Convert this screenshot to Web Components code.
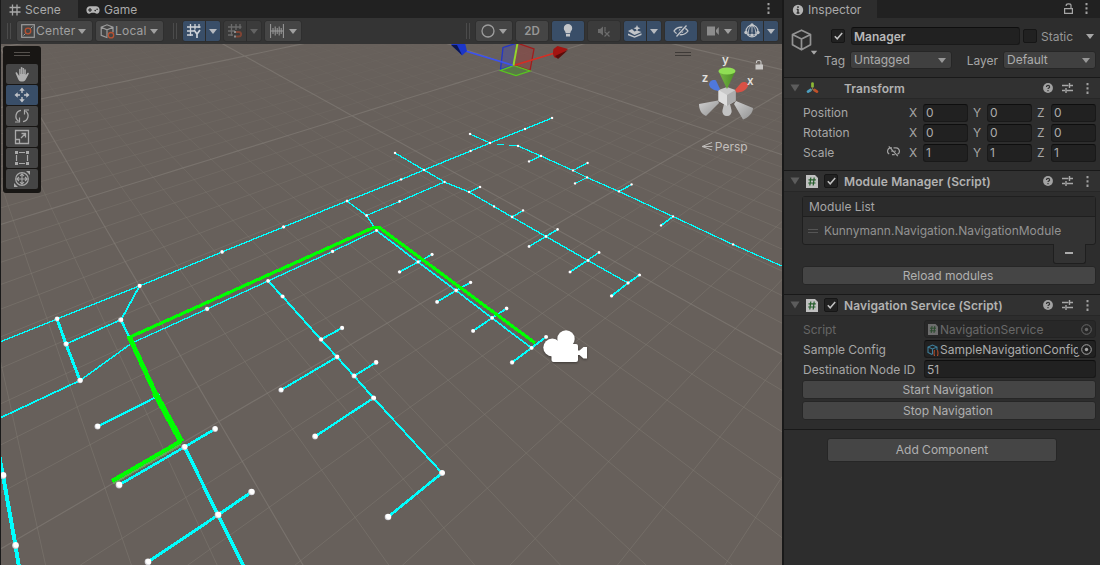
<!DOCTYPE html>
<html lang="en"><head><meta charset="utf-8"><title>Editor</title>
<style>
html,body{margin:0;height:100%;background:#191919;overflow:hidden}
body{font:12px/16px Inter,"Open Sans","Liberation Sans",sans-serif;color:#a6a6a6}
</style></head><body>
<editor-window></editor-window>
<script>
const define=(name,css,html)=>customElements.define(name,class extends HTMLElement{
  constructor(){super();this.attachShadow({mode:'open'});}
  connectedCallback(){
    if(this.shadowRoot.childNodes.length)return;
    const t=document.createElement('template');
    t.innerHTML='<style>*{box-sizing:border-box}'+css+'</style>'+(typeof html==='function'?html(this):html);
    this.shadowRoot.append(t.content.cloneNode(true));
  }
});

/* name: [width, height, markup] */
const ICONS={
  hash:[12,12,'<path d="M3.500 .5v11M8 .5v11M.5 3.500h11M.5 8h11" stroke="#a8a8a8" stroke-width="1.300"/>'],
  pad:[14,10,'<path d="M4 1.200h6c2 0 3.600 1.400 3.600 3.700S12.400 8.700 10.900 8.700c-1.200 0-1.700-1-2.400-1h-3c-.7 0-1.200 1-2.400 1C1.600 8.700.4 7.200.4 4.900S2 1.200 4 1.200z" fill="#b4b4b4"/><path d="M4 3v4M2 5h4" stroke="#222" stroke-width="1.100"/><circle cx="9.200" cy="5.600" r=".8" fill="#222"/><circle cx="11.100" cy="4.200" r=".8" fill="#222"/>'],
  dots:[3,11,'<path d="M.5 0h2v2.300h-2zM.5 4.300h2v2.300h-2zM.5 8.600h2v2.300h-2z" fill="#a0a0a0"/>'],
  caret:[8,5,'<path d="M0 0h8L4 5z" fill="currentColor"/>'],
  fold:[10,8,'<path d="M.5 .5h9L5 7.500z" fill="#5c5c5c"/>'],
  center:[14,14,'<rect x=".7" y=".7" width="12.600" height="12.600" fill="none" stroke="#9c9c9c" stroke-width="1.200"/><path d="M2.500 11.500l2-2M9.500 4.500l2-2" stroke="#9c9c9c"/><circle cx="7" cy="7" r="2.800" fill="none" stroke="#b85232" stroke-width="1.300"/>'],
  local:[15,15,'<path d="M7.500 13.800L1.200 11.300V3.200L7 .800l6 2.400v5M1.200 3.200L7 5.800l6-2.600M7 5.800v7" fill="none" stroke="#9c9c9c" stroke-width="1.200"/><circle cx="11" cy="11.200" r="2.700" fill="#444" stroke="#b85232" stroke-width="1.300"/>'],
  gridy:[14,14,'<path d="M3.500 0v12M8 0v5.500M12 0v4M0 3h13.500M0 7h7M0 11h6" stroke="#cfd3d8" stroke-width="1.300" fill="none"/><path d="M7 6l3 4 3-4M10 9.500V14" fill="none" stroke="#cfd3d8" stroke-width="1.700"/>'],
  snap:[14,14,'<path d="M3.500 0v12M8 0v6M12 0v5M0 3h13.500M0 7h7M0 11h5" stroke="#6b6b6b" stroke-width="1.300" fill="none"/><path d="M8 8h2.800a2.300 2.300 0 0 1 0 4.600H8" fill="none" stroke="#7f4434" stroke-width="2"/><path d="M6 7h2v2H6zM6 11.600h2v2H6z" fill="#8a8a8a"/>'],
  ruler:[14,14,'<path d="M.6 0v14M13.400 0v14M3 4v6M5.200 2.500v9M7.200 4v6M9.200 2.500v9M11.200 4v6M1 7h12" stroke="#9c9c9c" fill="none"/>'],
  shade:[14,14,'<circle cx="7" cy="7" r="6" fill="none" stroke="#9c9c9c" stroke-width="1.300"/><path d="M11 2.500A5.500 5.500 0 0 1 2.500 11 6 6 0 0 0 13 8 6 6 0 0 0 11 2.500z" fill="#9c9c9c"/>'],
  bulb:[10,14,'<path d="M5 0a4.200 4.200 0 0 1 4.200 4.200c0 2.200-1.700 2.800-1.900 5H2.700C2.500 7 .8 6.400.8 4.200A4.200 4.200 0 0 1 5 0zM3 10h4v2.400H3z" fill="#c2c5c9"/>'],
  mute:[12,12,'<path d="M0 4h2l3-2.500v9L2 8H0z" fill="#6b6b6b"/><path d="M7 2v4M6.500 6.500l5 5M11.500 6.500l-5 5" stroke="#6b6b6b" stroke-width="1.200"/>'],
  fx:[14,13,'<path d="M0 6l4-2 2.500 2.500 2.500-1L13.500 7 6.500 10zM0 8.500v1.700l6.500 2.500 7-2.800V8.300l-7 2.900z" fill="#c2c5c9"/><path d="M9 0l1 2.200 2.500 1-2.500 1L9 6.500 8 4.200l-2.500-1 2.500-1z" fill="#c2c5c9"/>'],
  eye:[16,12,'<path d="M1 6c3.500-5 10.500-5 14 0-3.500 5-10.500 5-14 0z" fill="none" stroke="#c2c5c9" stroke-width="1.300"/><circle cx="8" cy="6" r="2.300" fill="#c2c5c9"/><path d="M3 11.500L13 .5" stroke="#394e68" stroke-width="3"/><path d="M3.500 11.500L13.500 .5" stroke="#c2c5c9" stroke-width="1.300"/>'],
  cam:[12,10,'<path d="M0 .5h8v9H0zM9 4l2.800-3v8L9 6z" fill="#8c8c8c"/>'],
  gizmo:[16,16,'<circle cx="8" cy="8" r="5.900" fill="none" stroke="#c2c5c9" stroke-width="1.200"/><path d="M8 1.500v8M2.500 10.500c3 2 8 2 11 0M8 2C4.500 5 4 8 4.500 12M8 2c3.500 3 4 6 3.500 10" fill="none" stroke="#c2c5c9" stroke-width=".9"/><g fill="#c2c5c9"><circle cx="8" cy="1.800" r="1.600"/><circle cx="2" cy="9.500" r="1.700"/><circle cx="14" cy="9.500" r="1.700"/><circle cx="8" cy="12" r="1.600"/></g>'],
  hand:[16,16,'<path d="M5.200 9V3.200a.9.9 0 0 1 1.600 0V1.500a.9.900 0 0 1 1.700 0v1a.9.900 0 0 1 1.700.2V4a.8.800 0 0 1 1.600.2V9l1.400-1.800c.8-.8 1.900 0 1.500.8L12 13c-.7 1.700-1.500 2.400-3 2.400H7c-1.500 0-2.400-1-3-2.600L1.700 7.600c-.5-1.200.8-1.700 1.400-.8L5.200 10z" fill="#b0b0b0"/><path d="M6.700 3v5M8.500 2.500V8M10.200 3v5" stroke="#464646" stroke-width=".4"/>'],
  move:[16,16,'<path d="M8 2v4M8 10v4M2 8h4M10 8h4" stroke="#c2c5c9" stroke-width="1.400"/><path d="M5.300 3.700L8 .5l2.700 3.200zM5.300 12.300L8 15.500l2.700-3.200zM3.700 5.300L.5 8l3.200 2.700zM12.300 5.300L15.500 8l-3.200 2.700z" fill="#c2c5c9"/>'],
  rotate:[16,16,'<path d="M7 2.300A5.900 5.900 0 0 0 4.500 13M9 13.700A5.900 5.900 0 0 0 11.500 3" fill="none" stroke="#a9a9a9" stroke-width="1.300"/><path d="M1 14h4.500V9.500M15 2h-4.500v4.500" fill="none" stroke="#a9a9a9" stroke-width="1.200"/>'],
  scale:[16,16,'<path d="M1.500 1.500h13v13h-13zM1.500 10.500h4v4M7 9l4.500-4.500M7.500 4.500h4v4" fill="none" stroke="#a9a9a9" stroke-width="1.300"/>'],
  rect:[16,16,'<path d="M5 2.500h6M5 13.500h6M2.500 5v6M13.500 5v6" stroke="#a9a9a9" stroke-width="1.200"/><path d="M1 1h3v3H1zM12 1h3v3h-3zM1 12h3v3H1zM12 12h3v3h-3z" fill="#a9a9a9"/>'],
  multi:[16,16,'<circle cx="8" cy="8" r="6.300" fill="none" stroke="#a9a9a9" stroke-width="1.200"/><path d="M8 3v10M3 8h10M6 5l2-2.200L10 5M6 11l2 2.200L10 11M5 6L2.800 8 5 10M11 6l2.200 2L11 10" fill="none" stroke="#a9a9a9" stroke-width="1.100"/><path d="M12 0h4v4zM0 12v4h4z" fill="#a9a9a9"/>'],
  info:[12,12,'<circle cx="6" cy="6" r="5.200" fill="#b4b4b4"/><path d="M6 2.300v1.800M6 5v4.500M4.700 5.400H6M4.600 9h2.800" stroke="#2d2d2d" stroke-width="1.400"/>'],
  lock:[9,11,'<path d="M.6 5.600h7.800v4.800H.6zM2.200 3V2.200C2.200.3 7 .3 7 2.200v3" fill="none" stroke="#a6a6a6" stroke-width="1.200"/>'],
  cube:[21,22,'<path d="M10.500 1.200l9 4.200v10.400l-9 5-9-5V5.400zM1.500 5.400l9 4.600 9-4.600M10.500 10v10.500" fill="none" stroke="#939393" stroke-width="1.700" stroke-linejoin="round"/>'],
  xform:[13,12,'<path d="M6.500 4.600V1.500" stroke="#8cb935" stroke-width="2.700" stroke-linecap="round"/><path d="M4.600 8L2 9.600" stroke="#4d9fc0" stroke-width="2.700" stroke-linecap="round"/><path d="M8.400 8L11 9.600" stroke="#c44f27" stroke-width="2.700" stroke-linecap="round"/><path d="M6.500 5v2.300L4.500 8.500M6.500 7.300l2 1.200" stroke="#7b7b5a" fill="none"/>'],
  help:[10,10,'<circle cx="5" cy="5" r="4.900" fill="#a3a3a3"/><path d="M3.500 3.900c0-2 3.100-1.900 3.100 0 0 1.200-1.600 1.100-1.600 2.200M5 7v1.300" fill="none" stroke="#313131" stroke-width="1.200"/>'],
  preset:[11,10,'<path d="M0 2.500h6.500M8 2.500h3M0 7.500h3M4.500 7.500H11" stroke="#a8a8a8" stroke-width="1.300"/><path d="M7.500 0v5M4 5v5" stroke="#a8a8a8" stroke-width="1.400"/>'],
  script:[12,13,'<path d="M0 0h9l3 3v10H0z" fill="#c0c0c0"/><path d="M4.800 2.500l-1 8M8.200 2.500l-1 8M2.500 4.900h7.300M2.200 8h7.300" stroke="#245c2b" stroke-width="1.200"/>'],
  script2:[10,11,'<path d="M0 0h7.500L10 2.500V11H0z" fill="#6d6d6d"/><path d="M4 2l-.8 7M6.800 2L6 9M2 4.200h6M1.800 6.800h6" stroke="#2b4a2e"/>'],
  check:[9,8,'<path d="M.8 4.200l2.400 2.600L8.200 .9" fill="none" stroke="#c2c2c2" stroke-width="1.500"/>'],
  nolink:[13,11,'<path d="M5 1.800H3.800a3.400 3.400 0 0 0-1.600 6.300M6.500 1.800h2.700a3.400 3.400 0 0 1 1.200 6.500M5 8.600h2.700M4.300 5.200h1.500M7.500 5.200h1.300M1.800 .4l9 9.800" fill="none" stroke="#a0a0a0" stroke-width="1.200"/>'],
  so:[12,12,'<path d="M5 10.500l-4-2V3l4.500-2L10 3v3M1 3l4.500 2L10 3M5.500 5v5.500" fill="none" stroke="#3e7f9c" stroke-width="1.100"/><path d="M8 6.500c-1 0-.8 1-.8 1.800s-.7.900-.7.900.7 0 .7.900-.2 1.500.8 1.500M10 6.500c1 0 .8 1 .8 1.800s.7.900.7.900-.7 0-.7.900.2 1.500-.8 1.500" fill="none" stroke="#b04c2c" stroke-width="1.100"/>'],
  pick:[11,11,'<circle cx="5.500" cy="5.500" r="4.800" fill="none" stroke="#a6a6a6"/><circle cx="5.500" cy="5.500" r="1.700" fill="#a6a6a6"/>'],
  grip:[10,4,'<path d="M0 .5h10M0 3.500h10" stroke="#555"/>']
};
define('ui-icon',':host{display:inline-flex;flex:none}svg{display:block}',e=>{
  const [w,h,m]=ICONS[e.getAttribute('name')];
  return `<svg width="${w}" height="${h}" viewBox="0 0 ${w} ${h}" fill="none">${m}</svg>`;
});

/* toolbar */
define('tool-button',`:host{display:flex;align-items:center;justify-content:center;height:20px;width:var(--w);background:#454545;border-radius:2px;flex:none;gap:var(--g,4px);color:#a0a0a0;box-shadow:0 0 0 .5px #2b2b2b}
:host([start]){justify-content:flex-start;padding-left:4px;letter-spacing:.2px}
:host([on]){background:#394e68;color:#b6bac0}:host([off]){background:#3b3b3b;color:#636363}
:host([l]){border-radius:2px 0 0 2px}:host([r]){border-radius:0 2px 2px 0}`,'<slot></slot>');
define('drag-handle',':host{display:block;width:4px;height:16px;border:solid #4b4b4b;border-width:0 1px;flex:none}','');
define('scene-tabs',`:host{display:flex;height:18px;background:#212121;align-items:stretch}
.t{display:flex;align-items:center;gap:4px;padding:1px 0 0 8px;width:77px;color:#aaa;line-height:17px;letter-spacing:.05px}
.on{background:#343434}.s{flex:1}.m{display:flex;align-items:center;padding-right:12px;padding-bottom:2px}`,
`<div class="t on"><ui-icon name="hash"></ui-icon><span>Scene</span></div><div class="t"><ui-icon name="pad"></ui-icon><span>Game</span></div><div class="s"></div><div class="m"><ui-icon name="dots"></ui-icon></div>`);
define('scene-toolbar',`:host{display:flex;height:26px;padding:0 4px 0 6px;background:#343434;align-items:center}
.a{margin-left:4px}.b{margin-left:1px}.c{margin-left:6px}b{font-weight:600;font-size:11.500px;color:#979797}.s{flex:1}`,
`<drag-handle></drag-handle>
<tool-button class="c" start style="--w:75px;--g:1px"><ui-icon name="center"></ui-icon><span>Center</span><ui-icon name="caret" style="margin-left:2px"></ui-icon></tool-button>
<tool-button class="a" start style="--w:67px;--g:0px"><ui-icon name="local"></ui-icon><span>Local</span><ui-icon name="caret" style="margin-left:3px"></ui-icon></tool-button>
<drag-handle style="margin-left:10px"></drag-handle>
<tool-button class="c" on l style="--w:22px"><ui-icon name="gridy"></ui-icon></tool-button><tool-button class="b" on r style="--w:14px"><ui-icon name="caret"></ui-icon></tool-button>
<tool-button class="a" off l style="--w:22px"><ui-icon name="snap"></ui-icon></tool-button><tool-button class="b" off r style="--w:14px"><ui-icon name="caret"></ui-icon></tool-button>
<tool-button class="a" style="--w:36px;--g:5px"><ui-icon name="ruler"></ui-icon><ui-icon name="caret"></ui-icon></tool-button>
<div class="s"></div><drag-handle></drag-handle>
<tool-button class="c" style="--w:36px"><ui-icon name="shade"></ui-icon><ui-icon name="caret"></ui-icon></tool-button>
<tool-button class="a" style="--w:32px"><b>2D</b></tool-button>
<tool-button class="a" on style="--w:32px"><ui-icon name="bulb"></ui-icon></tool-button>
<tool-button class="a" off style="--w:32px"><ui-icon name="mute"></ui-icon></tool-button>
<tool-button class="a" on l style="--w:22px"><ui-icon name="fx"></ui-icon></tool-button><tool-button class="b" on r style="--w:14px"><ui-icon name="caret"></ui-icon></tool-button>
<tool-button class="a" on style="--w:32px"><ui-icon name="eye"></ui-icon></tool-button>
<tool-button class="a" style="--w:36px;--g:5px"><ui-icon name="cam"></ui-icon><ui-icon name="caret"></ui-icon></tool-button>
<tool-button class="a" on l style="--w:22px"><ui-icon name="gizmo"></ui-icon></tool-button><tool-button class="b" on r style="--w:14px"><ui-icon name="caret"></ui-icon></tool-button>`);
define('tool-palette',`:host{display:flex;flex-direction:column;gap:1px;width:38px;height:147px;padding:6px 3px 3px;background:#181614;border-radius:3px}
.g{height:4px;width:16px;border:solid #55514d;border-width:1px 0;margin:0 auto 7px}tool-button{--w:32px;box-shadow:none}`,
'<div class="g"></div>'+['hand','move','rotate','scale','rect','multi'].map(n=>`<tool-button ${n=='move'?'on':''}><ui-icon name="${n}"></ui-icon></tool-button>`).join(''));

/* ground plane: least-squares homography through known grid crossings */
function solve(A,b){const n=b.length;for(let i=0;i<n;i++){let p=i;for(let r=i;r<n;r++)if(Math.abs(A[r][i])>Math.abs(A[p][i]))p=r;
  [A[i],A[p]]=[A[p],A[i]];[b[i],b[p]]=[b[p],b[i]];
  for(let r=0;r<n;r++)if(r!=i){const f=A[r][i]/A[i][i];for(let c=i;c<n;c++)A[r][c]-=f*A[i][c];b[r]-=f*b[i];}}
  return b.map((v,i)=>v/A[i][i]);}
function groundGrid(){
  const pts=[[1,2,87.2,198],[2,1,245,56],[2,2,352,116],[3,2,513,65],[1,3,218.3,421],[2,3,552,227],[3,3,714.500,133],[1.4,3.4,526.8,452.7],[1.4,3.5,575,497.3],[1.5,3.5,608.3,461.3]];
  const A=Array.from({length:8},()=>Array(8).fill(0)),b=Array(8).fill(0);
  const add=(r,v)=>{for(let i=0;i<8;i++){b[i]+=r[i]*v;for(let j=0;j<8;j++)A[i][j]+=r[i]*r[j];}};
  for(const [u,v,X,Y] of pts){const x=X/500,y=Y/500;add([u,v,1,0,0,0,-u*x,-v*x],x);add([0,0,0,u,v,1,-u*y,-v*y],y);}
  const h=solve(A,b);
  const P=(u,v)=>{const w=h[6]*u+h[7]*v+1;return [500*(h[0]*u+h[1]*v+h[2])/w,500*(h[3]*u+h[4]*v+h[5])/w,w];};
  const sign=Math.sign(P(2,2)[2]);
  let minor='',major='';
  const line=f=>{let d='',pen=false;for(let t=-3;t<=9;t+=.1){const p=f(t);
    if(p[2]*sign>0&&p[0]>-400&&p[0]<1400&&p[1]>-200&&p[1]<1100){d+=(pen?'L':'M')+p[0].toFixed(1)+' '+p[1].toFixed(1);pen=true}else pen=false}return d;};
  for(let k=-30;k<=90;k++){const d=line(t=>P(k/10,t))+line(t=>P(t,k/10));if(k%10)minor+=d;else major+=d;}
  return `<g fill="none" stroke="#8a847e"><path d="${minor}" stroke-opacity=".36" mask="url(#fade)"/><path d="${major}" stroke-opacity=".5" stroke-width="1.200"/></g>`;
}
const EDGES=[
 [1.300,'0 342 57 319 139.500 286 222 252 283.500 227 347 201 401 179.500 424 170 470.500 151 490 143 525 129 552 118'],
 [3,'57 319 66 344 80 380.500'],[1.600,'66 344 120.500 320'],[1.800,'139.500 286 121 320'],[2.500,'121 320 132 343'],
 [1.500,'80 380.500 132 343'],[1.700,'0 418 80 380.500'],[1.300,'132 343 207 309 268 281 332.500 251.500 376.500 230.500'],
 [2.200,'97.500 426.500 160 395'],[2.600,'119 485 184.500 447 215 429'],[3.500,'184.500 447 218 515 244 567'],
 [3,'148 562 218 515 251.500 492'],[4,'-1 455 3 475.500 15.500 545.500 19 567'],
 [2,'268 281 282.500 296.500 321 339.500 337 357 354 376 373.500 398 442 473'],[2.600,'442 473 388 517'],
 [1.900,'321 339.500 342 328'],[2,'337 357 281 390'],[2,'354 376 376 362.500'],[2.300,'373.500 398 315 436.500'],
 [1.300,'347 201 366.500 215.500 376.500 230.500'],[1.200,'366.500 215.500 399.500 201.500 444.500 182'],
 [1.300,'395 153 424 170 444.500 182 469 192 494 206.500 512 217 546 236.500 588 260.500 628 283'],
 [1.300,'469 192 480 187'],[1.400,'512 217 523 210.500'],[1.500,'529 246.500 557.500 229.500'],[1.600,'570 272 599 252.500'],[1.800,'611.500 296 628 283 639.500 275'],
 [1.100,'470 134 490 143'],[1,'497 144.500 504 144.500'],[1,'509 145.500 518 146'],
 [1.200,'518 146 541 156 573 170.500 587 177.500 619 191.500 673 216.500 733 244.500 783 266.500'],
 [1.200,'529 161.500 541 156'],[1.200,'573 170.500 587.500 163'],[1.200,'575 183.500 587 177.500'],[1.400,'619 191.500 631.500 184.500'],[1.500,'661 225.500 673 216.500'],
 [1.600,'376.500 230.500 418 262 456 290.500 492 318 531.500 348'],
 [1.600,'399.500 272 418 262 432 254.500'],[1.700,'437 302 456 290.500 470.500 282.500'],[1.800,'473 331 492 318 506.500 308.500'],[2,'512 362.500 531.500 348 546 337']];
const SKIP=new Set(['132 343','-1 455','0 342','0 418','19 567','244 567','160 395','497 144.5','504 144.5','509 145.5','783 266.5']);
function graph(){
  let lines='',nodes={};
  for(const [w,s] of EDGES){const n=s.split(' ').map(Number);lines+=`<polyline points="${n.join(' ')}" stroke-width="${w}"/>`;
    for(let i=0;i<n.length;i+=2){const k=n[i]+' '+n[i+1];if(!SKIP.has(k))nodes[k]=[n[i],n[i+1]];}}
  const dots=Object.values(nodes).map(([x,y])=>{const r=Math.max(1.300,1.350+(y-150)/170-(x-150)/1000);return `<circle cx="${x}" cy="${y}" r="${Math.min(r,3.400).toFixed(1)}"/>`}).join('');
  return [`<g fill="none" stroke="#00ffff" shape-rendering="crispEdges">${lines}</g>`,`<g fill="url(#ball)">${dots}</g>`];
}
define('scene-canvas',':host{display:block}svg{display:block}',()=>{const [l,d]=graph();return `<svg width="781" height="521" viewBox="1 44 781 521">
<defs><radialGradient id="ball" cx=".6" cy=".4" r=".7"><stop offset=".5" stop-color="#fff"/><stop offset="1" stop-color="#a9a9b2"/></radialGradient>
<linearGradient id="fg" x1="0" y1="44" x2="0" y2="260" gradientUnits="userSpaceOnUse"><stop offset="0" stop-color="#222"/><stop offset="1" stop-color="#fff"/></linearGradient>
<mask id="fade" maskUnits="userSpaceOnUse" x="0" y="0" width="800" height="600"><rect width="800" height="600" fill="url(#fg)"/></mask>
<linearGradient id="gc"><stop offset="0" stop-color="#77b844"/><stop offset="1" stop-color="#4c8a26"/></linearGradient>
<linearGradient id="wc" x2="1" y2="1"><stop offset="0" stop-color="#d0d0d0"/><stop offset="1" stop-color="#929292"/></linearGradient></defs>
<rect width="800" height="600" fill="#67605b"/>${groundGrid()}${l}
<g stroke="#0f0" fill="none" shape-rendering="crispEdges"><path d="M113 483.500l68-39" stroke="#5fae55" stroke-width="2"/><path d="M112 481L181 441" stroke-width="4"/><path d="M155 393L181.500 442" stroke-width="6"/><path d="M129 336L158 399" stroke-width="4.800"/><path d="M128 338L374 227.300h5L535 343" stroke-width="3.200"/></g>
${d}
<g><path d="M503 47.500L517 43l-3 22-13.500 4.500z" fill="#2b3cff" fill-opacity=".22" stroke="#2336c8" stroke-width="1.300"/><path d="M517 43l17 6-4 21.500-16-5.500z" fill="#c42222" fill-opacity=".25" stroke="#a01c1c" stroke-width="1.300"/><path d="M514 65.500l16 5.500-14 4.500-15.500-5z" fill="#3faa20" fill-opacity=".35" stroke="#58c81e" stroke-width="1.300"/>
<path d="M462 50l51.500 15.500" stroke="#3b52f0" stroke-width="1.700"/><path d="M513.500 65.500L555 53" stroke="#d62c22" stroke-width="1.700"/><path d="M513.500 65.500L517.500 43" stroke="#93d62c" stroke-width="2"/>
<path d="M451 44l14-1 2 8-5 4.500z" fill="#1b36c9"/><path d="M451 45l6 0 5 10z" fill="#0b1650"/><path d="M568 49l-10 8.500c-4 2-6-3-4.500-8.500l4-3z" fill="#a31512"/><path d="M568 50l-13 6 3 3z" fill="#5c0d0b"/></g>
<g filter="drop-shadow(0 1px 1px #0006)" fill="#fff"><circle cx="566" cy="339" r="8.700"/><circle cx="552.300" cy="347.500" r="9"/><rect x="551.500" y="344" width="26.500" height="18" rx="2"/><path d="M578 350.500h1.500l4-3.500h3.500v11.500h-3.500l-4-3.500H578z"/></g>
<path d="M675 52.500h16M675 55.500h16" stroke="#3e3a37"/>
<g><path d="M718 100.500L699 104c0 5 2 10 7 12l13-13z" fill="url(#wc)"/><path d="M736 101l17 7c0 5-5 10-10 11.500L734 104z" fill="url(#wc)"/>
<path d="M724 104h6l1.500 6a4.700 4.700 0 1 1-9 0z" fill="#c2c2c2"/><path d="M718.500 90l8.500-3 8.500 3v11l-8.500 5-8.500-5z" fill="#c9c9c9"/><path d="M718.500 90l8.500 5v11l-8.500-5z" fill="#dedede"/><path d="M735.500 90l-8.500 5v11l8.500-5z" fill="#acacac"/>
<path d="M718.500 71h17L727 89z" fill="url(#gc)"/><ellipse cx="727" cy="71" rx="8.500" ry="3.600" fill="#90de54"/>
<path d="M709 84.500c0-3 4-5.500 7-4l4 8.500-2 2c-4-1-8-2-9-6.500z" fill="#4f78dc"/><path d="M748 86c1-3-4-5.500-7-3l-6 7 1.500 2.500c5 0 9.500-2 11.500-6.500z" fill="#d95145"/></g>
<g fill="#e2e0de" font-family="Inter,sans-serif" font-size="11.500" font-weight="600" text-anchor="middle"><text x="725.300" y="63.500">y</text><text x="705" y="82">z</text><text x="750.300" y="84.500">x</text></g>
<path d="M755.500 64.500h7.500v5h-7.500z" fill="#c9c7c5"/><path d="M756.500 63v-1c0-2 4.500-2 4.500 0v3" fill="none" stroke="#c9c7c5" stroke-width="1.100"/>
<path d="M712 142.500l-10 4 10 3.500M702 146.500h10.500" fill="none" stroke="#bdbab7"/><text x="714.800" y="151" fill="#c2bfbc" font-family="Inter,sans-serif" font-size="12">Persp</text></svg>`});
define('scene-panel',`:host{display:flex;flex-direction:column;border-left:1px solid #191919;border-right:1px solid #191919}
.v{position:relative;flex:1}tool-palette{position:absolute;left:2px;top:2px}`,
'<scene-tabs></scene-tabs><scene-toolbar></scene-toolbar><div class="v"><scene-canvas></scene-canvas><tool-palette></tool-palette></div>');

/* inspector controls */
define('text-field',`:host{display:flex;align-items:center;height:18px;background:#212121;border:1px solid #191919;border-top-color:#0e0e0e;border-radius:3px;padding:1px 3px 0 2px;gap:2px;flex:1;min-width:0;color:#acacac}
:host([disabled]){background:#282828;border-color:#232323;color:#686868}`,'<slot></slot>');
define('push-button',':host{display:flex;align-items:center;justify-content:center;height:18px;background:#454545;border:1px solid #262626;border-radius:3px;color:#b0b0b0;padding-right:2px}','<slot></slot>');
define('drop-down',`:host{display:flex;align-items:center;justify-content:space-between;height:18px;background:#404040;border:1px solid #262626;border-radius:3px;padding:0 5px 0 3px;color:#acacac}ui-icon{color:#989898}`,'<slot></slot><ui-icon name="caret"></ui-icon>');
define('check-box',':host{display:flex;align-items:center;justify-content:center;width:14px;height:14px;background:#212121;border:1px solid #161616;border-radius:2px;flex:none}',e=>e.hasAttribute('checked')?'<ui-icon name="check"></ui-icon>':'');
define('component-header',`:host{display:flex;height:22px;align-items:center;border-top:1px solid #191919;border-bottom:1px solid #272727;background:#313131;padding:0 11px 0 6px;color:#b2b2b2;font-weight:600}
.i{display:flex;width:12px;margin-left:6px}.c{width:14px;margin:0 6px}.t{flex:1;white-space:nowrap;padding-top:1px;letter-spacing:.1px}.r{display:flex;gap:9.500px;align-items:center}`,
e=>`<ui-icon name="fold"></ui-icon><div class="i"><ui-icon name="${e.getAttribute('icon')}"></ui-icon></div><div class="c">${e.hasAttribute('toggle')?'<check-box checked></check-box>':''}</div><div class="t"><slot></slot></div><div class="r"><ui-icon name="help"></ui-icon><ui-icon name="preset" style="margin-left:-1px"></ui-icon><ui-icon name="dots" style="margin-left:4px"></ui-icon></div>`);
define('vector-row',`:host{display:flex;align-items:center;height:18px}.l{width:84px}.k{width:22px}.a{width:14px}text-field{flex:none;width:45px;padding-top:0}text-field+.a{margin-left:5px}`,
e=>`<div class="l">${e.getAttribute('label')}</div><div class="k">${e.hasAttribute('link')?'<ui-icon name="nolink"></ui-icon>':''}</div>`+['X','Y','Z'].map(a=>`<div class="a">${a}</div><text-field>${e.getAttribute('value')}</text-field>`).join(''));
define('prop-row',':host{display:flex;align-items:center;height:18px}:host([dim]){color:#666}.l{width:122px;white-space:nowrap;padding:2px 0 0 1px;letter-spacing:-.03px}','<div class="l"><slot name="label"></slot></div><slot></slot>');
define('module-list',`:host{display:flex;flex-direction:column}.b{border:1px solid #1f1f1f;border-radius:3px;background:#333}
.h{height:20px;line-height:20px;padding-left:6px;background:#2b2b2b;border-bottom:1px solid #1f1f1f}
.r{height:27px;display:flex;align-items:center;gap:6px;padding:0 0 0 5px;color:#929292}
.f{align-self:flex-end;margin:-1px 10px 0 0;width:33px;height:20px;background:#333;border:1px solid #1f1f1f;border-top:0;border-radius:0 0 3px 3px;display:flex;align-items:center;justify-content:center}.f i{width:8px;height:2px;background:#acacac;margin:-2px 2px 0 0}`,
'<div class="b"><div class="h">Module List</div><div class="r"><ui-icon name="grip"></ui-icon><slot></slot></div></div><div class="f"><i></i></div>');
define('object-header',`:host{display:flex;height:59px;padding:9px 4px 0 7px;gap:0}
.c{width:27px;display:flex;flex-direction:column;padding-top:2px}.c ui-icon+ui-icon{margin:-1px 0 0 19px}
.f{flex:1;display:flex;flex-direction:column;gap:6px}.r{display:flex;align-items:center;height:18px}`,
`<div class="c"><ui-icon name="cube"></ui-icon><ui-icon name="caret" style="transform:scale(.85)"></ui-icon></div>
<div class="f"><div class="r"><check-box checked style="margin:0 6px 0 13px"></check-box><text-field style="flex:none;width:169px"><b style="font-weight:600;color:#b8b8b8">Manager</b></text-field><check-box style="margin:0 4px 0 3px"></check-box><span style="flex:1;color:#979797;padding-top:1px">Static</span><ui-icon name="caret" style="margin-right:2px"></ui-icon></div>
<div class="r"><span style="width:32px;text-align:right;padding:2px 5px 0 0">Tag</span><drop-down style="width:102px">Untagged</drop-down><span style="width:51px;text-align:right;padding:2px 5px 0 0">Layer</span><drop-down style="flex:1">Default</drop-down></div></div>`);
define('inspector-panel',`:host{display:flex;flex-direction:column;background:#2d2d2d;border-left:1px solid #191919}
.tabs{display:flex;height:18px;background:#212121}.t{width:93px;background:#2d2d2d;display:flex;align-items:center;gap:4px;padding:2px 0 0 8px;color:#aaa}.s{flex:1}.m{display:flex;align-items:center;gap:12px;padding:0 12px 2px 0}
.body{display:flex;flex-direction:column;gap:2px;padding:0 4px 0 18px}.end{border-top:1px solid #191919;padding:8px 43px 0}push-button.w{height:24px;padding:0 0 1px}`,
`<div class="tabs"><div class="t"><ui-icon name="info"></ui-icon><span>Inspector</span></div><div class="s"></div><div class="m"><ui-icon name="lock"></ui-icon><ui-icon name="dots"></ui-icon></div></div>
<object-header></object-header>
<component-header icon="xform">Transform</component-header>
<div class="body" style="height:71px;padding:5px 4px 0 19px"><vector-row label="Position" value="0"></vector-row><vector-row label="Rotation" value="0"></vector-row><vector-row label="Scale" value="1" link></vector-row></div>
<component-header icon="script" toggle>Module Manager (Script)</component-header>
<div class="body" style="height:102px;padding-top:4px"><module-list>Kunnymann.Navigation.NavigationModule</module-list><push-button style="height:19px">Reload modules</push-button></div>
<component-header icon="script" toggle>Navigation Service (Script)</component-header>
<div class="body" style="height:113px;padding-top:4px">
<prop-row dim><span slot="label">Script</span><text-field disabled><ui-icon name="script2" style="margin:0 0 0 1px"></ui-icon><span style="flex:1">NavigationService</span><ui-icon name="pick" style="opacity:.5"></ui-icon></text-field></prop-row>
<prop-row><span slot="label">Sample Config</span><text-field><ui-icon name="so"></ui-icon><span style="flex:1;white-space:nowrap;min-width:0;margin-left:-1px">SampleNavigationConfig</span><ui-icon name="pick" style="background:#212121;box-shadow:-3px 0 #212121"></ui-icon></text-field></prop-row>
<prop-row><span slot="label">Destination Node ID</span><text-field>51</text-field></prop-row>
<push-button style="height:19px">Start Navigation</push-button><push-button style="height:19px">Stop Navigation</push-button></div>
<div class="end"><push-button class="w">Add Component</push-button></div>`);
define('editor-window',':host{display:grid;grid-template-columns:783px 317px;height:565px;width:1100px}','<scene-panel></scene-panel><inspector-panel></inspector-panel>');
</script></body></html>
